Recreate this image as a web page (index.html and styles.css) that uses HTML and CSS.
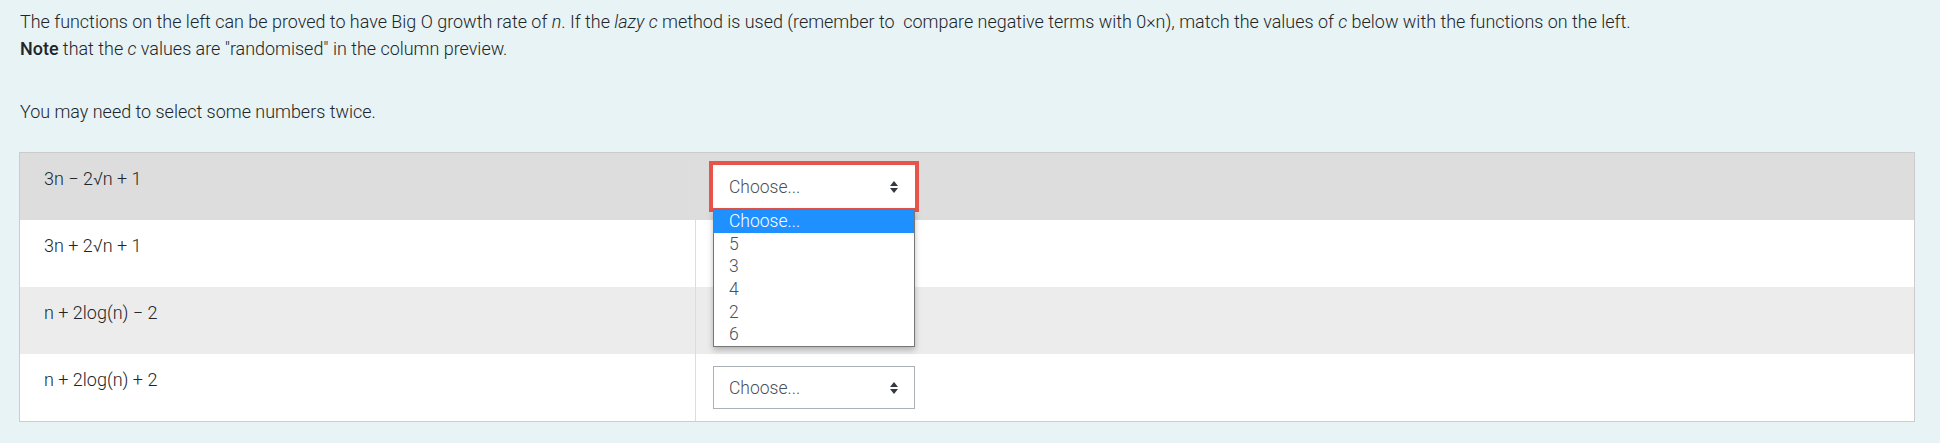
FILE: index.html
```html
<!DOCTYPE html>
<html lang="en">
<head>
<meta charset="utf-8">
<title>Matching question</title>
<link rel="stylesheet" href="styles.css">
</head>
<body>
<div class="page">
  <div class="qtext">
    <p>The functions on the left can be proved to have Big O growth rate of <i>n</i>. If the <i>lazy c</i> method is used (remember to&nbsp; compare negative terms with 0×n), match the values of <i>c</i> below with the functions on the left.</p>
    <p><strong>Note</strong> that the <i>c</i> values are "randomised" in the column preview.</p>
    <p class="spaced">You may need to select some numbers twice.</p>
  </div>
  <table class="answer">
    <colgroup><col class="c1"><col class="c2"></colgroup>
    <tbody>
      <tr class="r-hover">
        <td class="text">3n − 2√n + 1</td>
        <td class="control">
          <div class="select-wrap">
            <div class="select focused"><span>Choose...</span>
              <svg class="arrows" width="8" height="12" viewBox="0 0 8 12"><path d="M4 0 L8 5 L0 5 Z M0 7 L8 7 L4 12 Z" fill="#343a40"/></svg>
            </div>
            <ul class="dropdown">
              <li class="active">Choose...</li>
              <li>5</li>
              <li>3</li>
              <li>4</li>
              <li>2</li>
              <li>6</li>
            </ul>
          </div>
        </td>
      </tr>
      <tr class="r-plain">
        <td class="text">3n + 2√n + 1</td>
        <td class="control">
          <div class="select"><span>Choose...</span>
            <svg class="arrows" width="8" height="12" viewBox="0 0 8 12"><path d="M4 0 L8 5 L0 5 Z M0 7 L8 7 L4 12 Z" fill="#343a40"/></svg>
          </div>
        </td>
      </tr>
      <tr class="r-stripe">
        <td class="text">n + 2log(n) − 2</td>
        <td class="control">
          <div class="select"><span>Choose...</span>
            <svg class="arrows" width="8" height="12" viewBox="0 0 8 12"><path d="M4 0 L8 5 L0 5 Z M0 7 L8 7 L4 12 Z" fill="#343a40"/></svg>
          </div>
        </td>
      </tr>
      <tr class="r-plain">
        <td class="text">n + 2log(n) + 2</td>
        <td class="control">
          <div class="select"><span>Choose...</span>
            <svg class="arrows" width="8" height="12" viewBox="0 0 8 12"><path d="M4 0 L8 5 L0 5 Z M0 7 L8 7 L4 12 Z" fill="#343a40"/></svg>
          </div>
        </td>
      </tr>
    </tbody>
  </table>
</div>
</body>
</html>
```

FILE: styles.css
```css
html, body {
  margin: 0;
  padding: 0;
}
body {
  display: flex;
  background: #ffffff;
  font-family: Roboto, "Liberation Sans", sans-serif;
  color: #212529;
}
.page {
  width: 1940px;
  height: 443px;
  box-sizing: border-box;
  background: #e7f3f5;
  padding: 8px 0 0 19px;
}
.qtext {
  padding-left: 1px;
}
.qtext p {
  margin: 0;
  font-size: 17.95px;
  font-weight: 300;
  line-height: 27px;
}
.qtext strong {
  font-weight: 500;
}
.qtext .spaced {
  margin-top: 36px;
}
.answer {
  margin-top: 27px;
  width: 1896px;
  table-layout: fixed;
  border-collapse: separate;
  border-spacing: 0;
  border: 1px solid #cccccc;
  background: #ffffff;
}
.answer .c1 { width: 675px; }
.answer .c2 { width: 1219px; }
.answer td {
  vertical-align: top;
  padding: 12px 0;
}
.answer td.text {
  padding-left: 24px;
  font-size: 18px;
  font-weight: 300;
  line-height: 27px;
  color: #212529;
}
.answer td.control {
  padding-left: 17px;
  border-left: 1px solid #dcdcdc;
}
.r-hover { background: #dddddd; }
.r-plain { background: #ffffff; }
.r-stripe { background: #ececec; }

.select-wrap {
  position: relative;
  width: 202px;
}
.select {
  width: 202px;
  height: 43px;
  box-sizing: border-box;
  border: 1px solid #aab1b8;
  background: #ffffff;
  padding: 0 16px 0 15px;
  display: flex;
  align-items: center;
  justify-content: space-between;
  font-size: 17.5px;
  font-weight: 300;
  color: #495057;
}
.select.focused {
  border-color: #ffffff;
  outline: 4px solid #e6544b;
}
.arrows {
  display: block;
}
.dropdown {
  position: absolute;
  top: 44px;
  left: 0;
  width: 202px;
  box-sizing: border-box;
  margin: 0;
  padding: 0;
  list-style: none;
  background: #ffffff;
  border: 1px solid #767676;
  box-shadow: 0 3px 6px rgba(0, 0, 0, 0.25);
  z-index: 2;
}
.dropdown li {
  height: 22.67px;
  line-height: 22.67px;
  padding-left: 15px;
  font-size: 17.5px;
  font-weight: 300;
  color: #495057;
}
.dropdown li.active {
  background: #1e90ff;
  color: #ffffff;
}
```
